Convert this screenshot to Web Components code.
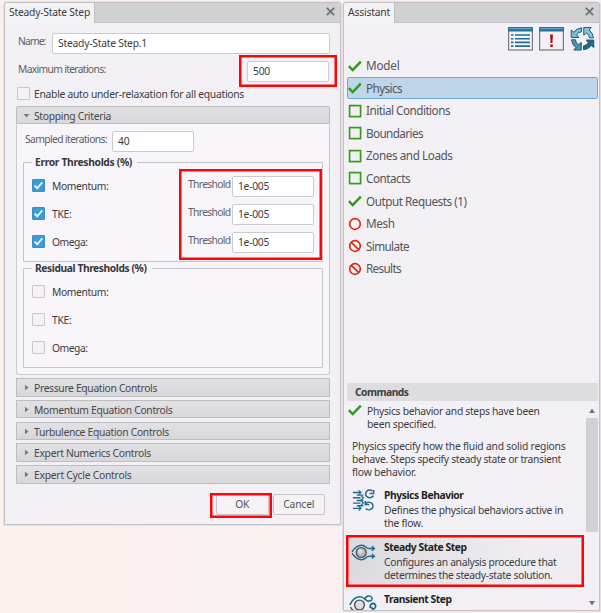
<!DOCTYPE html>
<html lang="en">
<head>
<meta charset="utf-8">
<title>Steady-State Step</title>
<style>
html,body{margin:0;height:100%;overflow:hidden}
body{font:10.3px/13px "Noto Sans","Open Sans",sans-serif;color:#3c3c42;background:linear-gradient(90deg,#fbf1ec,#f9f0f1 40%,#fbefec)}
</style>
</head>
<body>
<sim-desktop></sim-desktop>
<script>
const define=(name,html,setup)=>customElements.define(name,class extends HTMLElement{
  connectedCallback(){
    if(this.shadowRoot)return;
    this.attachShadow({mode:'open'}).innerHTML=html;
    if(setup)setup(this,this.shadowRoot);
  }
});

/* One line of text, tracked so that it fills the width given in "w". */
define('fit-text','<style>:host{display:block;white-space:nowrap;flex:none}span{display:inline-block}</style><span></span>',(el,root)=>{
  const s=root.querySelector('span');
  s.textContent=el.getAttribute('t');
  const w=+el.getAttribute('w');
  if(w){
    const d=(w-s.getBoundingClientRect().width)/s.textContent.length;
    s.style.letterSpacing=d.toFixed(3)+'px';
  }
});

define('ui-input','<style>:host{display:block;box-sizing:border-box;width:82px;height:21px;flex:none;border:1px solid #cbcacf;border-radius:2px;background:#fff;padding:3px 0 0 5px}</style><slot></slot>');

define('ui-check',`<style>:host{display:block;box-sizing:border-box;width:13px;height:13px;flex:none;border:1px solid #c9c7cb;border-radius:1px;background:#f4f2f5}
:host([on]){background:#3b9bd4;border-color:#3690c7}svg{display:none;width:11px;height:11px}:host([on]) svg{display:block}</style>
<svg viewBox="0 0 11 11"><path d="M1.7 5.7 4.2 8.2 9.3 2.4" fill="none" stroke="#fff" stroke-width="1.7"/></svg>`);

define('ui-window',`<style>
:host{display:flex;flex-direction:column;box-sizing:border-box;border:1px solid #c5c2c7;border-radius:3px 3px 0 0;background:#f2f0f4;box-shadow:0 0 0 .5px #d5d0d4;position:relative}
header{height:19px;flex:none;display:flex;justify-content:space-between;background:#d1d1d4;border-bottom:1px solid #c3c2c6;border-radius:2px 2px 0 0}
.tab{height:20px;box-sizing:border-box;background:#f3f2f5;border-right:1px solid #bfbec2;padding:3px 0 0 4px;border-radius:2px 0 0 0}
svg{width:9px;height:9px;margin:4px 5px 0 0}
main{flex:1;min-height:0;display:flex;flex-direction:column}
</style><header><div class="tab"><slot name="title"></slot></div><svg viewBox="0 0 9 9"><path d="M.8.8 8.2 8.2M8.2.8.8 8.2" stroke="#737277" stroke-width="1.8"/></svg></header><main><slot></slot></main>`);

define('ui-section',`<style>
:host{display:block;flex:none}
.h{height:18.5px;box-sizing:border-box;border:1px solid #bdbcc0;background:linear-gradient(#e2e1e4,#d7d6d9);display:flex;padding:3px 0 0 17px;position:relative;color:#47474c}
svg{position:absolute;left:6px;top:5px;width:7px;height:7px}
:host([open]) svg{transform:rotate(90deg)}
:host([open]) .h{height:18px;border-radius:2px 2px 0 0;background:linear-gradient(#dfdee1,#dad9dc)}
.c{display:none}:host([open]) .c{display:block;box-sizing:border-box;height:251px;border:1px solid #cbcacf;border-top:0;border-radius:0 0 3px 3px;background:#f7f5f9;padding:7px 6px 0}
</style><div class="h"><svg viewBox="0 0 7 7"><path d="M2 .7 5.6 3.5 2 6.3Z" fill="#77767b"/></svg><slot name="head"></slot></div><div class="c"><slot></slot></div>`);

define('ui-group',`<style>
:host{display:block;box-sizing:border-box;height:100px;border:1px solid #c5c4c9;border-radius:1px}
.l{width:max-content;margin:-7px 0 0 8px;padding:0 5px 0 3px;background:#f7f5f9;font-weight:700;color:#38383d}
.rows{padding-top:8px}
</style><div class="l"><slot name="legend"></slot></div><div class="rows"><slot></slot></div>`);

define('threshold-row',`<style>
:host{display:flex;height:28px;box-sizing:border-box;padding-left:8px}
ui-check{margin-top:2px}.n{width:143px;flex:none;padding:3px 0 0 7px;box-sizing:border-box}
.t{width:44px;flex:none;color:#606066;padding-top:1px}
ui-input{margin-top:-1px}
</style><ui-check></ui-check><div class="n"></div>`,(el,root)=>{
  root.querySelector('.n').innerHTML=`<fit-text t="${el.getAttribute('name')}" w="${el.getAttribute('w')}"></fit-text>`;
  if(el.hasAttribute('value')){
    root.querySelector('ui-check').setAttribute('on','');
    root.querySelector('.n').insertAdjacentHTML('afterend',`<div class="t"><fit-text t="Threshold" w="42.5"></fit-text></div><ui-input><fit-text t="${el.getAttribute('value')}" w="31"></fit-text></ui-input>`);
  }
});

define('ui-button','<style>:host{display:flex;box-sizing:border-box;height:21px;width:52.5px;justify-content:center;padding-top:3px;border:1px solid #c7c5ca;border-radius:2px;background:#f4f2f5;color:#55555a}</style><slot></slot>');

/* Red rectangle that calls out a control. */
define('call-out','<style>:host{position:absolute;display:block;box-shadow:inset 0 0 0 2.5px #fb0509;pointer-events:none;z-index:2}</style>');

define('step-dialog',`<style>
:host{display:block;width:337px;flex:none}
ui-window{height:523px}
.row{display:flex;flex:none}.dim{color:#606066}
.name{height:27px;padding:11px 0 0 13px}.name .f{margin-left:auto;margin-right:10px}
.name ui-input{width:278px}
.max{height:26px;padding:0 11px 0 13px;justify-content:space-between}
.max .dim{padding-top:2px}
.auto{height:19px;padding-left:12px}
.auto fit-text{margin:1px 0 0 4px}
ui-section{margin:0 10px 3px 11px}
.samp{display:flex;height:31px;padding-left:2px}
.samp ui-input{margin-left:auto;margin-right:129px}
ui-group+ui-group{margin-top:6px}
.stack{display:flex;flex-direction:column}.stack ui-section{margin-bottom:3.25px}
.btns{display:flex;justify-content:flex-end;gap:4px;padding:7.5px 15px 0 0}
</style>
<ui-window><fit-text slot="title" t="Steady-State Step" w="81" style="padding-right:4px"></fit-text>
<div class="row name"><fit-text class="dim" style="padding-top:1px" t="Name:" w="27.5"></fit-text><ui-input class="f" style="margin-top:-1px"><fit-text t="Steady-State Step.1" w="89"></fit-text></ui-input></div>
<div class="row max"><fit-text class="dim" t="Maximum iterations:" w="87.5"></fit-text><ui-input><fit-text t="500" w="17"></fit-text></ui-input></div>
<div class="row auto"><ui-check></ui-check><fit-text t="Enable auto under-relaxation for all equations" w="210"></fit-text></div>
<ui-section open><fit-text slot="head" t="Stopping Criteria" w="77"></fit-text>
 <div class="samp"><fit-text class="dim" style="padding-top:2px" t="Sampled iterations:" w="82"></fit-text><ui-input><fit-text t="40" w="11.5"></fit-text></ui-input></div>
 <ui-group><fit-text slot="legend" t="Error Thresholds (%)" w="97"></fit-text>
  <threshold-row name="Momentum:" w="56.5" value="1e-005"></threshold-row><threshold-row name="TKE:" w="19.5" value="1e-005"></threshold-row><threshold-row name="Omega:" w="35.5" value="1e-005"></threshold-row></ui-group>
 <ui-group><fit-text slot="legend" t="Residual Thresholds (%)" w="111.5"></fit-text>
  <threshold-row name="Momentum:" w="56.5"></threshold-row><threshold-row name="TKE:" w="19.5"></threshold-row><threshold-row name="Omega:" w="35.5"></threshold-row></ui-group>
</ui-section>
<div class="stack">
<ui-section><fit-text slot="head" t="Pressure Equation Controls" w="123"></fit-text></ui-section>
<ui-section><fit-text slot="head" t="Momentum Equation Controls" w="138.5"></fit-text></ui-section>
<ui-section><fit-text slot="head" t="Turbulence Equation Controls" w="135"></fit-text></ui-section>
<ui-section><fit-text slot="head" t="Expert Numerics Controls" w="117"></fit-text></ui-section>
<ui-section><fit-text slot="head" t="Expert Cycle Controls" w="97.5"></fit-text></ui-section>
</div>
<div class="btns"><ui-button><fit-text t="OK" w="14"></fit-text></ui-button><ui-button><fit-text t="Cancel" w="31"></fit-text></ui-button></div>
<call-out style="left:234px;top:52px;width:98px;height:31.5px"></call-out>
<call-out style="left:174px;top:166px;width:143px;height:91px"></call-out>
<call-out style="left:205px;top:490px;width:62px;height:24.5px"></call-out>
</ui-window>`);

const STATUS={
 done:'<path d="M.8 7.2 4.7 11 12.8 2.7" fill="none" stroke="#2c9a17" stroke-width="2.4"/>',
 todo:'<rect x="1.6" y="1.6" width="11" height="11" fill="none" stroke="#379b22" stroke-width="1.7"/>',
 open:'<circle cx="7" cy="7" r="5.3" fill="#fbf5f5" stroke="#dd2a12" stroke-width="1.7"/>',
 blocked:'<circle cx="7" cy="7" r="5.3" fill="#fbf5f5" stroke="#dd2a12" stroke-width="1.7"/><path d="M3.3 3.3 10.7 10.7" stroke="#dd2a12" stroke-width="1.7"/>'};
define('status-icon','<style>:host{display:block;width:14px;height:14px;flex:none}svg{display:block;width:14px;height:14px}</style><svg viewBox="0 0 14 14"></svg>',(el,root)=>{root.querySelector('svg').innerHTML=STATUS[el.getAttribute('kind')]});

define('task-item','<style>:host{display:flex;box-sizing:border-box;height:22.6px;border:1px solid transparent;border-radius:2px;padding:3px 0 0 0;font-size:11.7px;line-height:15px;color:#55555a}:host([sel]){background:#bfd6ea;border-color:#68aad8}status-icon{margin:.5px 4px 0 0}</style><slot></slot>',(el,root)=>root.querySelector('slot').insertAdjacentHTML('beforebegin',`<status-icon kind="${el.getAttribute('kind')}"></status-icon>`));

const flow='fill="none" stroke="#216a8e"';
const ICON={
 physics:`<g ${flow} stroke-width="1.6" transform="translate(0 1) scale(.95 .88)"><path d="M1 4H9M1 10H9M1 16H9M1 22H9M5 7H12M5 13H12M5 19H12"/><path d="M7 1.5 9.5 4 7 6.5M9.5 7.500 12 10 9.500 12.500M9.500 13.500 12 16 9.500 18.500M7 19.500 9.500 22 7 24.500" stroke-width="1.3"/><path d="M21.500 2.300A4.300 4.300 0 1 0 22.500 7.500M22.800 1V5H18.500M14.500 22.200A4.300 4.300 0 1 0 15 16M14 13.500V17.500H18.200" stroke-width="1.7"/></g>`,
 steady:`<g ${flow} stroke-width="1.5"><path d="M0 11.800C2.500 8 5 5.200 9.500 5.200 14 5.200 13.500 8.500 17 8.500H22.500M0 13.200C2.500 17 5 19.800 9.500 19.800 14 19.800 13.500 16.300 17 16.300H22.500"/><path d="M19.800 6.300 22.300 8.500 19.800 10.700M19.800 14.100 22.300 16.300 19.800 18.500"/></g><circle cx="9.200" cy="12.500" r="4.900" fill="#b9babd" stroke="#505359" stroke-width="1.400"/><circle cx="8.300" cy="11.300" r="2.200" fill="#dededf"/>`,
 transient:`<g ${flow} stroke-width="1.500"><path d="M-2 13C0 8 3 4.800 8 4.800 12 4.800 14 9.500 17 9.500M-1.500 15C0 18 3 20 6 20M13 7C14 3.500 19 3 20 6 20.500 8.500 18 10 17 8"/><path d="M18.500 16C17 11.500 22.500 9.500 23.500 13.500 24 17 20 18.500 19.500 15" stroke-width="1.800"/></g><circle cx="7.500" cy="13" r="4.900" fill="#dedee0" stroke="#505359" stroke-width="1.400"/>`};
define('command-item',`<style>:host{display:flex;box-sizing:border-box;height:52.5px;flex:none;padding:0 0 0 5px}
svg{width:24px;height:26px;flex:none;overflow:visible;margin:-1px 8px 0 0}b{display:block;color:#1f1f24;margin-bottom:1.5px}</style>
<svg viewBox="0 0 24 26"></svg><div><b><slot name="name"></slot></b><slot></slot></div>`,(el,root)=>{root.querySelector('svg').innerHTML=ICON[el.getAttribute('icon')]});

const arrow='d="M-1-11.3A11.300 11.300 0 0 0-9-6.800L-11.600-9V-1.300H-3.800L-6-4.200A7.300 7.300 0 0 1-1-7.300Z"';
define('tool-icons',`<style>:host{display:flex;justify-content:flex-end;gap:6px;height:31px;padding:4px 4px 0 0;box-sizing:border-box;flex:none}svg{width:25px;height:24px}</style>
<svg viewBox="0 0 25 24"><rect x=".6" y=".6" width="23.800" height="22.400" fill="#f6f5f8" stroke="#77777c" stroke-width="1.200"/><path d="M0 0H25V4.500H0Z" fill="#256f97"/><path d="M1 1.700H24" stroke="#72afd0"/><path d="M3 8H5.500M3 11.700H5.500M3 15.400H5.500M3 19.100H5.500M7 8H22M7 11.700H22M7 15.400H22M7 19.100H22" stroke="#216d95" stroke-width="1.600"/></svg>
<svg viewBox="0 0 25 24"><rect x=".6" y=".6" width="23.800" height="22.400" fill="#f1f0f2" stroke="#77777c" stroke-width="1.200"/><path d="M0 0H25V4.500H0Z" fill="#256f97"/><path d="M1 1.700H24" stroke="#72afd0"/><path d="M11 7.500H14L13.400 16H11.600ZM11.200 17.500H13.800V20H11.200Z" fill="#b10e17"/></svg>
<svg viewBox="0 0 25 24"><g stroke="#1b5878" stroke-width="1" stroke-linejoin="round" transform="translate(12.500 11.800) scale(.97)"><path ${arrow} fill="#7fb9d8"/><path ${arrow} transform="rotate(90)" fill="#8dc1dc"/><path ${arrow} transform="rotate(180)" fill="#276783"/><path ${arrow} transform="rotate(270)" fill="#4f91b2"/></g></svg>`);

define('assistant-panel',`<style>
:host{display:block;width:257px;flex:none}
ui-window{height:609px}
.tasks{margin:0 1px 0 3px;height:329px;flex:none}
.cmd{height:18px;box-sizing:border-box;background:#dddcdf;margin:0 1px 1px 3px;padding:3px 0 0 8px;font-weight:700;flex:none}
.pane{display:flex;flex:1;min-height:0;margin:0 1px 0 3px}
.txt{flex:1;min-width:0;overflow:hidden;display:flex;flex-direction:column}
.st{display:flex;height:38px;flex:none;padding:2px 0 0 1px;box-sizing:border-box}
.st status-icon{margin:-1px 5px 0 0}.st>div{padding-top:1px}
.p{padding:0 0 0 5px;height:49px;flex:none;box-sizing:border-box}
.bar{width:13px;flex:none;display:flex;flex-direction:column;align-items:center}
.bar i{width:12px;height:114px;background:#d1d0d4;margin:5px 0 auto}
.bar svg{width:6px;height:5px;margin-top:6px}.bar svg:last-child{margin:0 0 4px}
</style>
<ui-window><fit-text slot="title" t="Assistant" w="42" style="padding-right:4px"></fit-text>
<tool-icons></tool-icons>
<div class="tasks">
<task-item kind="done"><fit-text t="Model" w="33.5"></fit-text></task-item>
<task-item kind="done" sel><fit-text t="Physics" w="36"></fit-text></task-item>
<task-item kind="todo"><fit-text t="Initial Conditions" w="84"></fit-text></task-item>
<task-item kind="todo"><fit-text t="Boundaries" w="57"></fit-text></task-item>
<task-item kind="todo"><fit-text t="Zones and Loads" w="86.500"></fit-text></task-item>
<task-item kind="todo"><fit-text t="Contacts" w="44"></fit-text></task-item>
<task-item kind="done"><fit-text t="Output Requests (1)" w="100.500"></fit-text></task-item>
<task-item kind="open"><fit-text t="Mesh" w="28.500"></fit-text></task-item>
<task-item kind="blocked"><fit-text t="Simulate" w="43"></fit-text></task-item>
<task-item kind="blocked"><fit-text t="Results" w="35"></fit-text></task-item>
</div>
<div class="cmd"><fit-text t="Commands" w="53.500"></fit-text></div>
<div class="pane"><div class="txt">
<div class="st"><status-icon kind="done"></status-icon><div><fit-text t="Physics behavior and steps have been" w="172.500"></fit-text><fit-text t="been specified." w="69"></fit-text></div></div>
<div class="p"><fit-text t="Physics specify how the fluid and solid regions" w="213.500"></fit-text><fit-text t="behave. Steps specify steady state or transient" w="209"></fit-text><fit-text t="flow behavior." w="64"></fit-text></div>
<command-item icon="physics" style="height:52px"><fit-text slot="name" t="Physics Behavior" w="79.500"></fit-text><fit-text t="Defines the physical behaviors active in" w="179"></fit-text><fit-text t="the flow." w="39"></fit-text></command-item>
<command-item icon="steady" style="background:linear-gradient(100deg,#dad9dd,#efedf1 75%);margin:-6px 3px 6.5px 0;padding-top:6px;height:51px"><fit-text slot="name" t="Steady State Step" w="82.500"></fit-text><fit-text t="Configures an analysis procedure that" w="172.500"></fit-text><fit-text t="determines the steady-state solution." w="168.500"></fit-text></command-item>
<command-item icon="transient" style="height:20px"><fit-text slot="name" t="Transient Step" w="67.500"></fit-text></command-item>
</div><div class="bar"><svg viewBox="0 0 6 5"><path d="M3 .500 6 5H0Z" fill="#77767b"/></svg><i></i><svg viewBox="0 0 6 5"><path d="M3 4.500 6 0H0Z" fill="#77767b"/></svg></div></div>
<call-out style="left:2px;top:532px;width:238px;height:52px"></call-out>
</ui-window>`);

define('sim-desktop','<style>:host{display:flex;align-items:flex-start;box-sizing:border-box;padding:2px 0 0 4px;gap:2px;width:601px;height:613px}</style><step-dialog></step-dialog><assistant-panel></assistant-panel>');
</script>
</body>
</html>
